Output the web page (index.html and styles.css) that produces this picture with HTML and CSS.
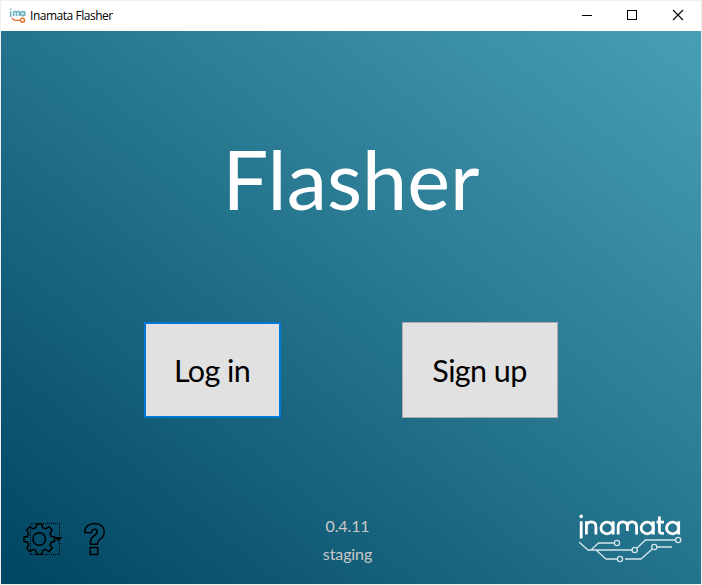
FILE: index.html
```html
<!DOCTYPE html>
<html lang="en">
<head>
<meta charset="utf-8">
<title>Inamata Flasher</title>
<link rel="stylesheet" href="styles.css">
</head>
<body>
<div class="window">
  <header class="titlebar">
    <svg class="app-icon" width="18" height="16" viewBox="0 0 18 16" fill="none">
      <g stroke="#6fb0c2" stroke-width="1.6">
        <path d="M1.7 3.3V9M1.7 .4V1.8M4.7 8V3.3M4.7 5Q4.7 3.3 6.1 3.3T7.5 5V8M7.5 5Q7.5 3.3 9 3.3T10.4 5V8M15.6 3V8"/>
        <circle cx="13.6" cy="5.6" r="2"/>
      </g>
      <path d="M3 9.8Q4.2 12.4 7 12.4H11.4" stroke="#e8702f" stroke-width="1.4"/>
      <circle cx="13.5" cy="12.2" r="2" stroke="#e8702f" stroke-width="1.5"/>
    </svg>
    <span class="caption">Inamata Flasher</span>
    <svg class="controls" width="138" height="30" viewBox="0 0 138 30" fill="none" stroke="#000" shape-rendering="crispEdges">
      <path d="M19 14.5H29"/>
      <rect x="64.5" y="9.5" width="9" height="9"/>
      <path d="M110 9L120 19M120 9L110 19" shape-rendering="auto" stroke-width="1.1"/>
    </svg>
  </header>
  <main class="content">
    <h1>Flasher</h1>
    <div class="actions">
      <button class="login">Log in</button>
      <button class="signup">Sign up</button>
    </div>
    <footer>
      <div class="tools">
        <svg width="40" height="34" viewBox="0 0 40 34" fill="none" stroke="#000">
          <rect x="7.5" y="1.5" width="29" height="31" stroke-dasharray="1 1" shape-rendering="crispEdges"/>
          <path d="M13.8 2H18.8L19.6 5.6L22.6 6.8L25.8 4.8L29.2 8L27 11.4L28.2 14.4L31.6 15V19.4L28.2 20L27 23L29.2 26.2L25.8 29.6L22.6 27.4L19.6 28.6L18.8 32.2H13.8L13 28.6L10 27.4L6.8 29.6L3.6 26.2L5.6 23L4.4 20L1 19.4V15L4.4 14.4L5.6 11.4L3.6 8L6.8 4.8L10 6.8L13 5.6Z" stroke-width="1.5" stroke-linejoin="round"/>
          <circle cx="16.2" cy="17" r="6.3" stroke-width="1.5"/>
          <path d="M31 15H39.5L35.3 19.2Z" fill="#000" stroke="none"/>
        </svg>
        <svg width="22" height="34" viewBox="0 0 22 34" fill="none" stroke="#000" stroke-width="1.5" stroke-linejoin="round">
          <path d="M.8 10.4C.8 4.8 4.8 1.4 10.6 1.4C16.6 1.4 20.2 5 20.2 9.8C20.2 14.3 18.3 15.7 15.6 17.5C13.6 18.8 13.4 19.5 13.4 22.3H6.3C6.3 17.9 6.9 15.9 9.9 13.9C12.3 12.3 13.3 11.6 13.3 9.8C13.3 8 12.2 7.2 10.6 7.2C8.5 7.2 7.6 8.5 7.4 10.8Z"/>
          <rect x="6.1" y="25.4" width="7.6" height="7.2"/>
        </svg>
      </div>
      <div class="version"><span>0.4.11</span><span>staging</span></div>
      <svg class="logo" width="104" height="50" viewBox="0 0 104 50" fill="none" stroke="#fff">
        <g stroke-width="2.8">
          <path d="M3.2 7.2V24.5M8.4 20.6V7.2M8.4 12.8Q8.4 7.8 13.2 7.8T17.9 12.8V20.6M35.2 7.2V20.6M40.2 20.6V12.8Q40.2 7.8 44.8 7.8T49.4 12.8V17M49.4 12.8Q49.4 7.8 54 7.8T58.6 12.8V20.6M75.3 7.2V20.6M81.4 2.5V17Q81.4 19.3 84.2 19.3H86M78.5 8.2H86M100.7 7.2V20.6"/>
          <ellipse cx="29" cy="14" rx="6.1" ry="5.8"/>
          <ellipse cx="69.2" cy="14" rx="6.1" ry="5.8"/>
          <ellipse cx="94.6" cy="14" rx="6.1" ry="5.8"/>
        </g>
        <circle cx="3.2" cy="2.4" r="1.8" fill="#fff" stroke="none"/>
        <g stroke-width="1.3" stroke="#d4e5ea">
          <path d="M1 28L10 36H54M13 36L20.5 29H36M18 36L28 45H39M59 34L67.5 26H97.5M47 45H63L74 35.2M79 33H94"/>
          <circle cx="39" cy="29" r="2.6"/><circle cx="56.7" cy="36" r="2.6"/>
          <circle cx="42" cy="45" r="2.6"/><circle cx="76.3" cy="33" r="2.6"/><circle cx="100.2" cy="26" r="2.6"/>
        </g>
      </svg>
    </footer>
  </main>
</div>
</body>
</html>
```
FILE: styles.css
```css
* { box-sizing: border-box; }
body { margin: 0; background: #f0f0f0; }
.window {
  width: 702px;
  height: 585px;
  padding: 1px;
  display: flex;
  flex-direction: column;
}
.titlebar {
  height: 30px;
  flex: none;
  background: #fff;
  display: flex;
  align-items: center;
  padding-left: 8px;
}
.app-icon { margin-top: -1px; }
.caption {
  margin-left: 3px;
  font: 12px/16px "Open Sans", "Noto Sans", sans-serif;
  letter-spacing: -0.47px;
  color: #000;
}
.controls { margin-left: auto; }
.content {
  flex: 1;
  display: flex;
  flex-direction: column;
  font-family: Lato, sans-serif;
  background: linear-gradient(to top right, #004562, #24738c 50%, #489fb5);
}
h1 {
  margin: 100px 0 0;
  font-size: 81px;
  line-height: 96px;
  font-weight: 400;
  text-align: center;
  color: #fff;
}
.actions {
  display: flex;
  gap: 121px;
  margin: 95px 0 0 143px;
}
button {
  height: 96px;
  padding: 0 1px 0 0;
  font: 30.5px/38px Lato, sans-serif;
  letter-spacing: -0.6px;
  color: #000;
  background: #e1e1e1;
  border: 1px solid #adadad;
}
.login { width: 137px; border: 2px solid #0078d7; }
.signup { width: 156px; }
footer {
  flex: 1;
  display: grid;
  grid-template-columns: 1fr 60px 1fr;
  align-items: start;
  padding: 94px 19px 0 22px;
}
.tools {
  display: flex;
  gap: 21px;
  padding-top: 10px;
}
.version {
  display: flex;
  flex-direction: column;
  align-items: center;
  gap: 8px;
  padding-top: 4px;
  font-size: 16px;
  line-height: 20px;
  letter-spacing: -0.1px;
  color: #c8c8c8;
  margin-left: -5px;
  margin-right: 5px;
}
.logo { justify-self: end; margin-top: 2px; }
```
